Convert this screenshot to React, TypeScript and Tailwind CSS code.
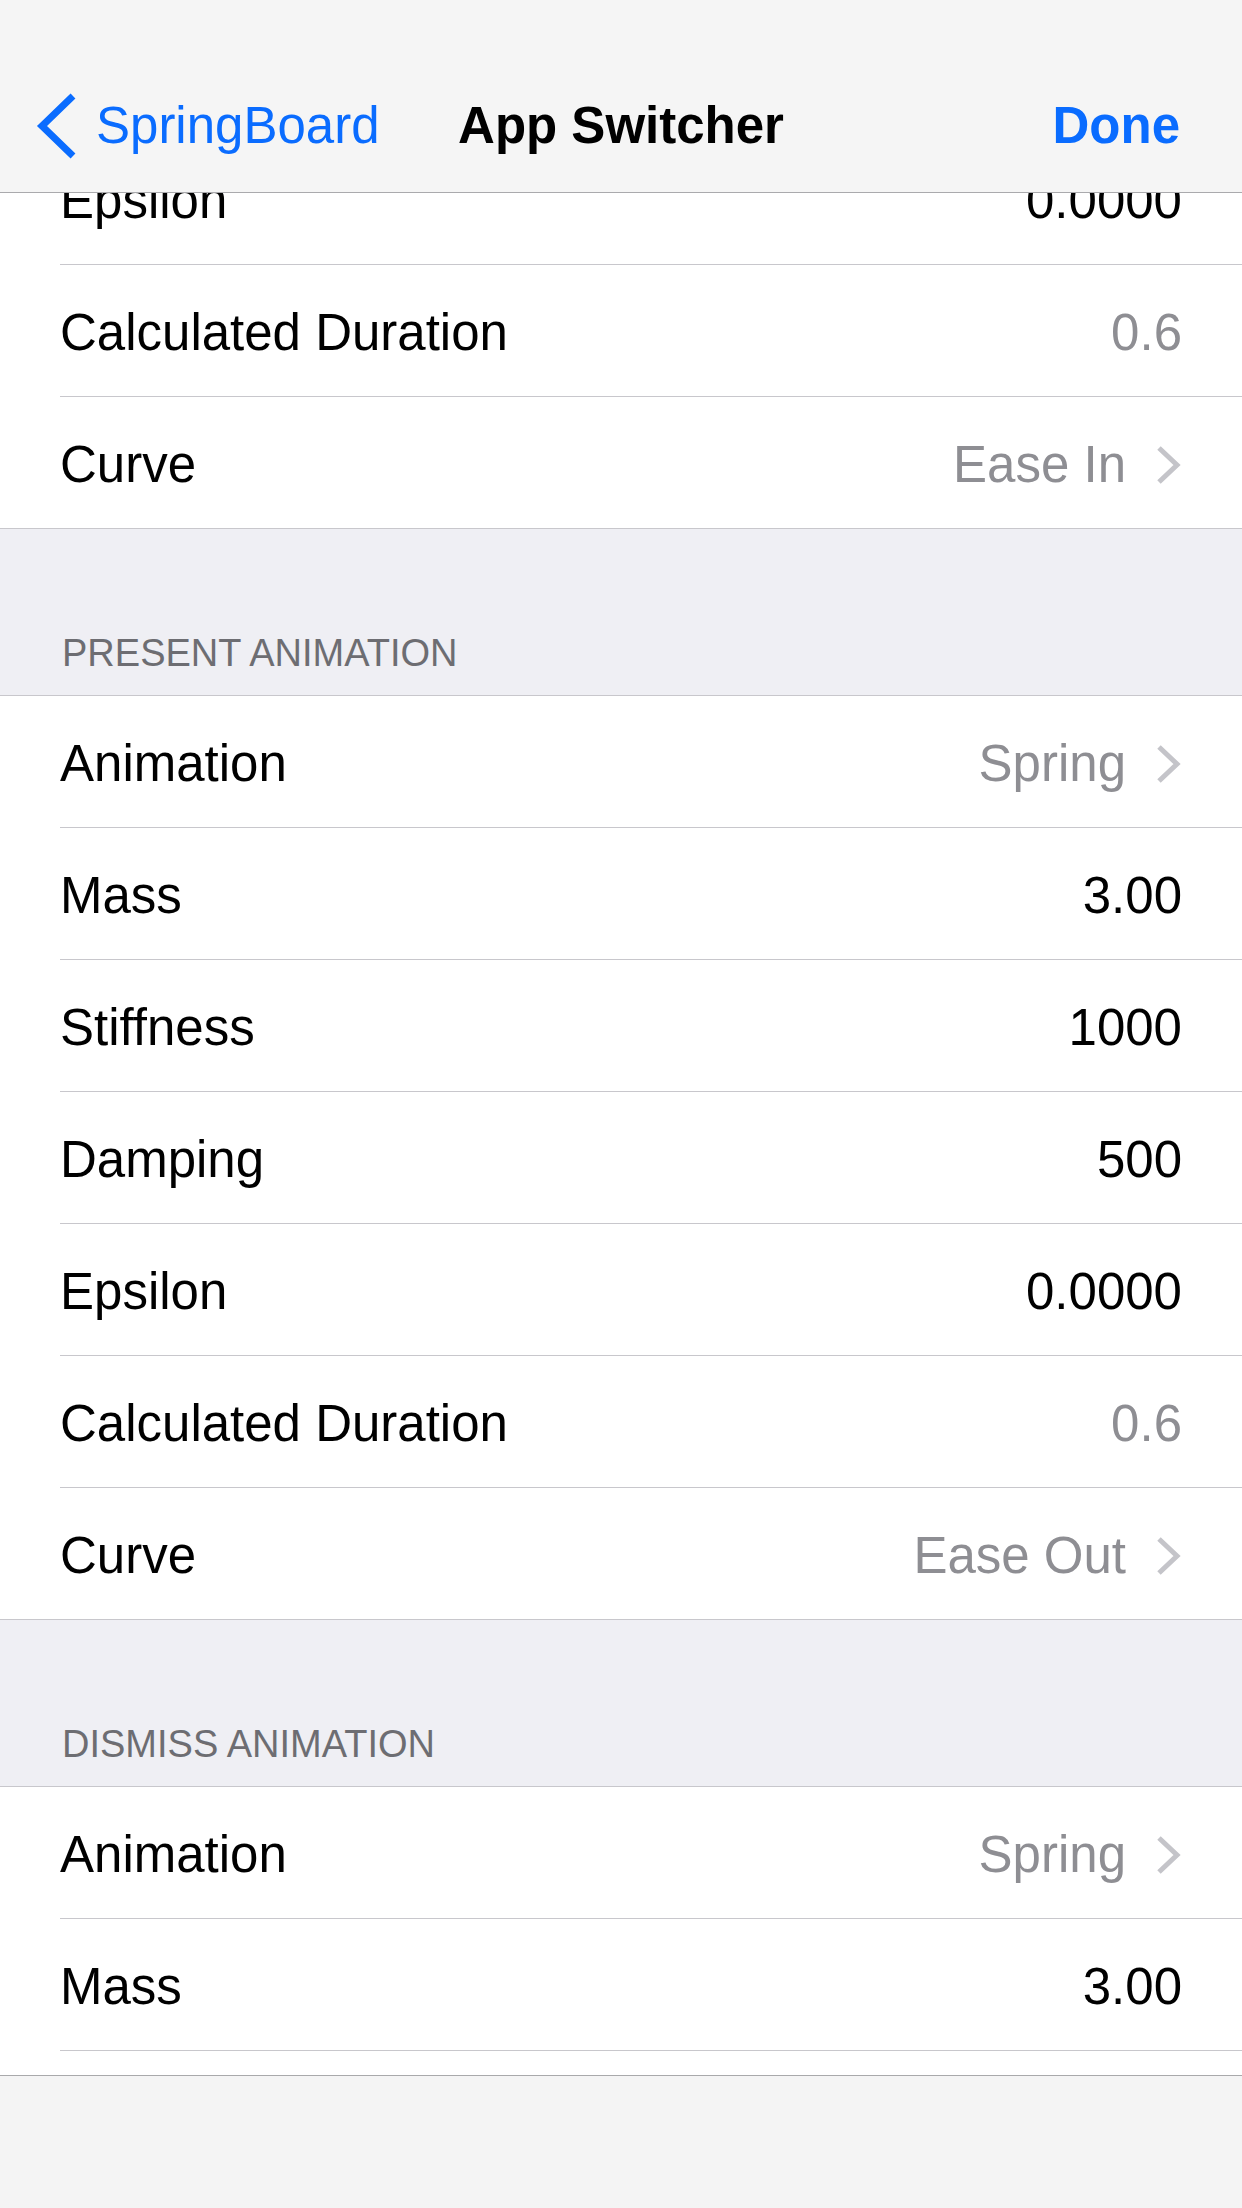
import React from 'react';

type Row = {
  label: string;
  value: string;
  muted?: boolean;
  chevron?: boolean;
};

const presentRows: Row[] = [
  { label: 'Animation', value: 'Spring', muted: true, chevron: true },
  { label: 'Mass', value: '3.00' },
  { label: 'Stiffness', value: '1000' },
  { label: 'Damping', value: '500' },
  { label: 'Epsilon', value: '0.0000' },
  { label: 'Calculated Duration', value: '0.6', muted: true },
  { label: 'Curve', value: 'Ease Out', muted: true, chevron: true },
];

const dismissRows: Row[] = [
  { label: 'Animation', value: 'Spring', muted: true, chevron: true },
  { label: 'Mass', value: '3.00' },
  { label: 'Stiffness', value: '1000' },
  { label: 'Damping', value: '500' },
];

const Chevron: React.FC = () => (
  <svg width="26" height="40" viewBox="0 0 26 40" className="ml-[30px] shrink-0">
    <polyline points="3,3 21,20 3,37" fill="none" stroke="#c4c4c9" strokeWidth="5" />
  </svg>
);

const SettingRow: React.FC<{ row: Row; last?: boolean }> = ({ row, last }) => (
  <div className="pl-[60px] bg-white">
    <div
      className={
        last
          ? 'h-[131px] flex items-center pr-[60px] pt-[5px]'
          : 'h-[132px] flex items-center pr-[60px] pt-[5px] border-b border-[#c8c7cc]'
      }
    >
      <span className="flex-1 text-[51px] leading-[58px] text-black">{row.label}</span>
      <span
        className={
          row.muted
            ? 'text-[51px] leading-[58px] text-[#8e8e93]'
            : 'text-[51px] leading-[58px] text-black'
        }
      >
        {row.value}
      </span>
      {row.chevron && <Chevron />}
    </div>
  </div>
);

const SectionHeader: React.FC<{ title: string }> = ({ title }) => (
  <div className="h-[166px] bg-[#efeff4] flex items-end pl-[62px] pb-[20px]">
    <span className="text-[38px] leading-[44px] text-[#6d6d72]">{title}</span>
  </div>
);

const Section: React.FC<{ rows: Row[] }> = ({ rows }) => (
  <div className="border-y border-[#c8c7cc]">
    {rows.map((row, i) => (
      <SettingRow key={row.label + i} row={row} last={i === rows.length - 1} />
    ))}
  </div>
);

export default function App() {
  return (
    <div className="w-[1242px] h-[2208px] overflow-hidden flex flex-col bg-white font-['Liberation_Sans',Arial,sans-serif]">
      {/* nav bar */}
      <header className="h-[193px] shrink-0 bg-[#f5f5f5] border-b border-[#aaaaad] pt-[60px]">
        <div className="h-[132px] grid grid-cols-[1fr_auto_1fr] items-center">
          <div className="flex items-center pl-[36px]">
            <svg width="42" height="66" viewBox="0 0 42 66" className="shrink-0">
              <polyline points="37,3 6,33 37,63" fill="none" stroke="#0a6cff" strokeWidth="7" />
            </svg>
            <span className="ml-[18px] text-[51px] leading-[58px] text-[#0a6cff]">SpringBoard</span>
          </div>
          <span className="text-[51px] leading-[58px] font-semibold text-black">App Switcher</span>
          <div className="flex justify-end pr-[62px]">
            <span className="text-[51px] leading-[58px] font-semibold text-[#0a6cff]">Done</span>
          </div>
        </div>
      </header>

      {/* scrolled list */}
      <div className="flex-1 overflow-hidden">
        <div className="-mt-[60px]">
          <div className="border-b border-[#c8c7cc]">
            <SettingRow row={{ label: 'Epsilon', value: '0.0000' }} />
            <SettingRow row={{ label: 'Calculated Duration', value: '0.6', muted: true }} />
            <SettingRow row={{ label: 'Curve', value: 'Ease In', muted: true, chevron: true }} last />
          </div>
          <SectionHeader title="PRESENT ANIMATION" />
          <Section rows={presentRows} />
          <SectionHeader title="DISMISS ANIMATION" />
          <Section rows={dismissRows} />
        </div>
      </div>

      {/* toolbar */}
      <footer className="h-[133px] shrink-0 bg-[#f4f4f4] border-t border-[#a9a9ab]" />
    </div>
  );
}
